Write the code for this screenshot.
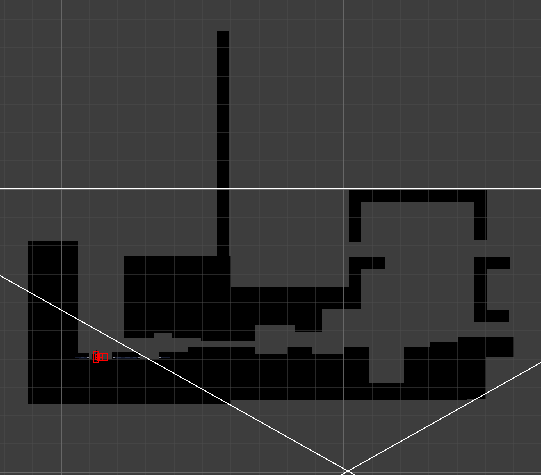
const minorX = [4, 32, 89, 117, 145, 174, 202, 230, 259, 287, 315, 372, 400, 428, 457, 485, 513];
const minorY = [19, 47, 76, 104, 132, 160, 217, 245, 274, 302, 330, 359, 387, 415, 443];
const majorX = [61, 343];
const majorY = [189, 472];

const walls = [
  'M217 31H229V256H231V287H349V257H385V269H361V309H322V332H295V325H255V341H201V338H172V333H154V338H124V256H217Z',
  'M28 241H78V353H89V359H112V352H140V359H159V352H188V347H255V354H287V347H312V354H344V347H369V383H404V347H430V342H458V337H514V357H486V399H467V400H231V404H28Z',
  'M349 190H487V240H474V202H361V242H349Z',
  'M474 257H510V269H487V310H509V322H474Z',
];

function Grid() {
  return (
    <g>
      <g fill="#4e4e4e" fillOpacity="0.5">
        {minorX.map((x) => <rect key={x} x={x} y="0" width="1" height="475" />)}
        {minorY.map((y) => <rect key={y} x="0" y={y} width="541" height="1" />)}
      </g>
      <g fill="#6e6e6e" fillOpacity="0.85">
        {majorX.map((x) => <rect key={x} x={x} y="0" width="1" height="475" />)}
        {majorY.map((y) => <rect key={y} x="0" y={y} width="541" height="1" />)}
      </g>
    </g>
  );
}

// One-pixel outline, built from filled edges.
function Box({ x, y, w, h }) {
  return <path fillRule="evenodd" d={`M${x} ${y}h${w}v${h}h${-w}ZM${x + 1} ${y + 1}v${h - 2}h${w - 2}v${2 - h}Z`} />;
}

function Marker() {
  return (
    <g>
      <path d="M92 354H98V359H92Z" fill="#090909" />
      <path d="M96 350H97V363H96Z" fill="#111" />
      <g fill="#ff0000">
        <Box x={93} y={351} w={6} h={12} />
        <Box x={95} y={354} w={5} h={6} />
        <Box x={97} y={353} w={6} h={8} />
        <Box x={102} y={353} w={6} h={8} />
        <path d="M95 357h7v1h-7z" />
      </g>
    </g>
  );
}

export default function App() {
  return (
    <main className="h-[475px] w-[541px] overflow-hidden bg-[#3d3d3d]">
      <svg className="block" width="541" height="475" viewBox="0 0 541 475" shapeRendering="crispEdges">
        {walls.map((d) => <path key={d} d={d} fill="#000" />)}
        <g strokeWidth="1" fill="none">
          <path d="M75 357.5H89M113 357.5H140M159 357.5H170" stroke="#171d31" />
          <path d="M79 358.5H87M116 358.5H137" stroke="#0d1220" />
          <path d="M81 357.5h3M117 357.5h4M125 357.5h5M133 357.5h3" stroke="#29324b" />
          <path d="M87 357.5h2M113 357.5h2M138 357.5h2M159 357.5h2" stroke="#8b8e9d" />
        </g>
        <Grid />
        <rect x="0" y="188" width="541" height="1" fill="#fff" />
        <path d="M0 275.6L355 475M341 475L541 362.5" stroke="#fff" fill="none" />
        <Marker />
      </svg>
    </main>
  );
}
